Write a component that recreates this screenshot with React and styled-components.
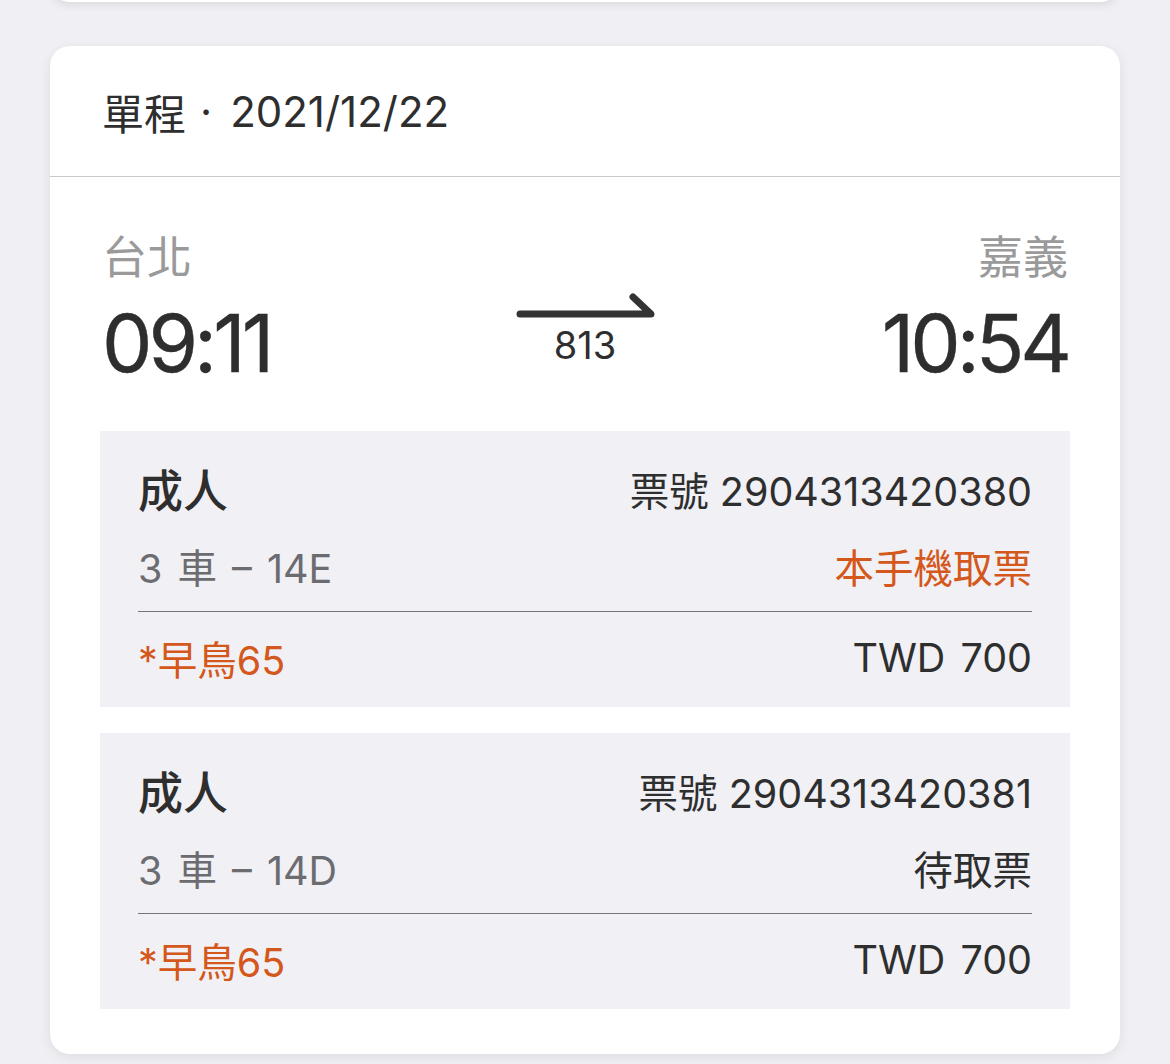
import React from 'react'
import styled, { createGlobalStyle } from 'styled-components'

const GlobalStyle = createGlobalStyle`
  html, body {
    margin: 0;
    padding: 0;
    background: #efeff4;
  }
  body {
    font-family: Inter, "Noto Sans CJK TC", "Noto Sans", sans-serif;
    color: #303030;
  }
`

const Page = styled.div`
  width: 1170px;
  height: 1064px;
  overflow: hidden;
  padding: 0 50px;
  box-sizing: border-box;
`

const PrevCard = styled.div`
  height: 20px;
  margin-top: -18px;
  background: #fff;
  border-radius: 0 0 20px 20px;
  box-shadow: 0 3px 10px rgba(0, 0, 0, 0.09);
`

const Card = styled.div`
  margin-top: 44px;
  background: #fff;
  border-radius: 20px;
  box-shadow: 0 3px 12px rgba(0, 0, 0, 0.08);
  padding-bottom: 45px;
`

const CardHeader = styled.div`
  height: 130px;
  display: flex;
  align-items: center;
  padding: 0 52px;
  border-bottom: 1px solid #c9c9cd;
  font-size: 42px;
  color: #2e2e2e;
`

const Dot = styled.span`
  margin: 0 18px 0 14px;
`

const Route = styled.div`
  display: grid;
  grid-template-columns: 1fr auto 1fr;
  align-items: center;
  padding: 54px 52px 0 52px;
  margin-bottom: 48px;
`

const Station = styled.div`
  grid-column: ${p => (p.$end ? 3 : 1)};
  justify-self: ${p => (p.$end ? 'end' : 'start')};
  font-size: 45px;
  line-height: 54px;
  color: #9a9a9a;
  margin-bottom: 18px;
`

const Time = styled.div`
  grid-column: ${p => (p.$end ? 3 : 1)};
  justify-self: ${p => (p.$end ? 'end' : 'start')};
  font-size: 80px;
  line-height: 80px;
  letter-spacing: -4px;
  color: #2e2e2e;
  -webkit-text-stroke: 0.4px #2e2e2e;
`

const TrainMark = styled.div`
  grid-column: 2;
  grid-row: 2;
  display: flex;
  flex-direction: column;
  align-items: center;
  margin-top: -26px;
`

const TrainNo = styled.div`
  font-size: 38px;
  line-height: 46px;
  color: #2e2e2e;
`

const Tickets = styled.div`
  display: flex;
  flex-direction: column;
  gap: 26px;
  padding: 0 50px;
`

const Ticket = styled.div`
  background: #f0f0f5;
  padding: 18px 38px 0 38px;
`

const Row = styled.div`
  display: flex;
  justify-content: space-between;
  align-items: center;
  box-sizing: border-box;
  height: ${p => p.$h}px;
  padding-bottom: ${p => p.$pb || 0}px;
  border-bottom: ${p => (p.$line ? '1px solid #76767a' : 'none')};
`

const Kind = styled.div`
  font-size: 45px;
  font-weight: 500;
  color: #2e2e2e;
`

const Text = styled.div`
  font-size: 39.5px;
  color: ${p => (p.$tone === 'orange' ? '#d4571b' : p.$tone === 'gray' ? '#6c6c70' : '#2e2e2e')};
  word-spacing: ${p => (p.$spaced ? '4px' : '0')};
`

function Arrow() {
  return (
    <svg width="144" height="30" viewBox="0 0 144 30">
      <path
        d="M7 22 H138 L120 5"
        fill="none"
        stroke="#333"
        strokeWidth="7"
        strokeLinecap="round"
        strokeLinejoin="round"
      />
    </svg>
  )
}

const tickets = [
  { no: '2904313420380', seat: '3 車 – 14E', pickup: '本手機取票', mine: true },
  { no: '2904313420381', seat: '3 車 – 14D', pickup: '待取票', mine: false },
]

export default function App() {
  return (
    <Page>
      <GlobalStyle />
      <PrevCard />
      <Card>
        <CardHeader>
          單程<Dot>·</Dot>2021/12/22
        </CardHeader>
        <Route>
          <Station>台北</Station>
          <Station $end>嘉義</Station>
          <Time>09:11</Time>
          <TrainMark>
            <Arrow />
            <TrainNo>813</TrainNo>
          </TrainMark>
          <Time $end>10:54</Time>
        </Route>
        <Tickets>
          {tickets.map(t => (
            <Ticket key={t.no}>
              <Row $h={78}>
                <Kind>成人</Kind>
                <Text>票號 {t.no}</Text>
              </Row>
              <Row $h={85} $pb={8} $line>
                <Text $tone="gray" $spaced>{t.seat}</Text>
                <Text $tone={t.mine ? 'orange' : undefined}>{t.pickup}</Text>
              </Row>
              <Row $h={95} $pb={4}>
                <Text $tone="orange">*早鳥65</Text>
                <Text $spaced>TWD 700</Text>
              </Row>
            </Ticket>
          ))}
        </Tickets>
      </Card>
    </Page>
  )
}
